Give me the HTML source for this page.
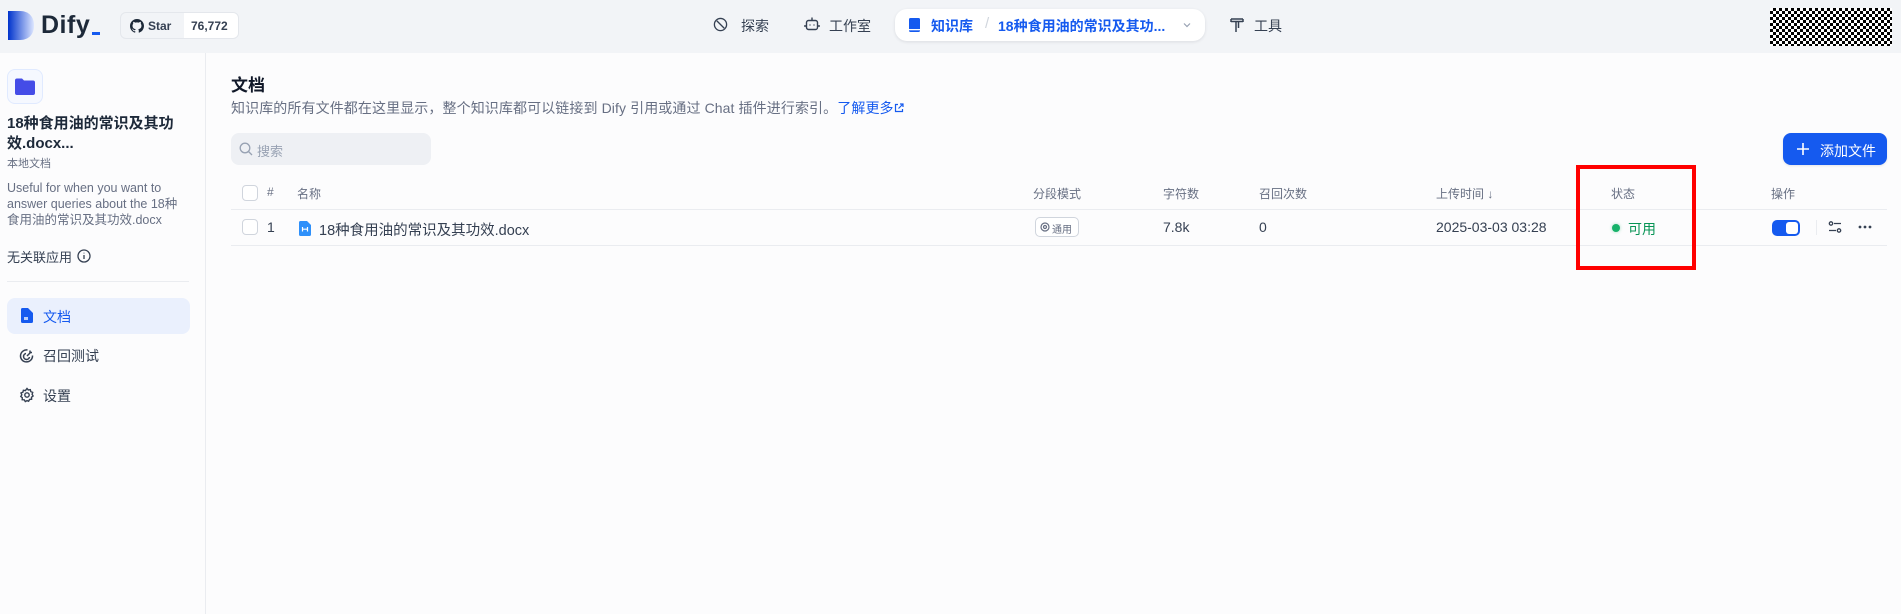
<!DOCTYPE html>
<html><head><meta charset="utf-8">
<style>
*{box-sizing:border-box;margin:0;padding:0}
body{width:1901px;height:614px;overflow:hidden;background:#fcfcfd;font-family:"Liberation Sans","Noto Sans CJK SC",sans-serif;color:#101828;position:relative}
.abs{position:absolute}
.hdr{left:0;top:0;width:1901px;height:53px;background:#f2f4f7}
.side{left:0;top:53px;width:206px;height:561px;border-right:1px solid #eaecf0;background:#fcfcfd}
.t{white-space:nowrap;position:absolute}
.th{font-size:12px;color:#676f83;top:185px}
.td{font-size:14px;color:#354052;top:219px}
.cb{width:16px;height:16px;border:1px solid #d0d5dd;border-radius:4px;background:#fff;position:absolute}
</style></head><body>
<div class="abs hdr"></div>
<svg class="abs" style="left:8px;top:11px" width="27" height="29" viewBox="0 0 27 29"><defs><linearGradient id="g" x1="0" x2="1"><stop offset="0" stop-color="#0033cc"/><stop offset="1" stop-color="#dde6ff"/></linearGradient></defs><path d="M0 0H12C21 0 26 6 26 14.5C26 23 21 29 12 29H0Z" fill="url(#g)"/></svg>
<div class="t" style="left:41px;top:11px;font-size:25px;font-weight:bold;color:#1d2939;letter-spacing:0.5px">Dify</div>
<div class="abs" style="left:92px;top:32px;width:8px;height:3px;background:#155aef"></div>
<div class="abs" style="left:120px;top:12px;width:119px;height:27px;border:1px solid #e4e7ec;border-radius:6px;background:#f2f4f7;overflow:hidden">
 <div class="abs" style="left:63px;top:0;width:56px;height:27px;background:#fff"></div>
 <svg class="abs" style="left:9px;top:6px" width="14" height="14" viewBox="0 0 16 16"><path fill="#1d2939" d="M8 0C3.58 0 0 3.58 0 8c0 3.54 2.29 6.530 5.47 7.59.4.07.55-.17.55-.38v-1.33c-2.23.48-2.7-1.07-2.7-1.07-.36-.92-.89-1.170-.89-1.17-.73-.5.05-.49.05-.49.8.06 1.23.83 1.23.83.71 1.23 1.87.87 2.330.66.07-.52.28-.87.51-1.07-1.78-.2-3.65-.89-3.65-3.95 0-.87.31-1.59.82-2.15-.08-.2-.36-1.02.08-2.12 0 0 .67-.21 2.2.82a7.6 7.6 0 0 1 4 0c1.53-1.04 2.2-.82 2.2-.82.44 1.1.16 1.92.08 2.12.51.56.82 1.27.82 2.15 0 3.07-1.87 3.75-3.65 3.95.29.25.54.73.54 1.48v2.2c0 .21.15.46.55.38A8 8 0 0 0 16 8c0-4.420-3.58-8-8-8z"/></svg>
 <div class="t" style="left:27px;top:6px;font-size:12px;font-weight:bold;color:#354052">Star</div>
 <div class="t" style="left:70px;top:6px;font-size:12px;font-weight:bold;color:#354052">76,772</div>
</div>
<svg class="abs" style="left:713px;top:17px" width="15" height="15" viewBox="0 0 16 16" fill="none" stroke="#354052" stroke-width="1.4"><circle cx="8" cy="8" r="6.5"/><path d="M4 4l8 8"/></svg>
<div class="t" style="left:741px;top:16px;font-size:14px;color:#354052">探索</div>
<svg class="abs" style="left:804px;top:16px" width="16" height="16" viewBox="0 0 16 16" fill="none" stroke="#354052" stroke-width="1.4"><rect x="2.5" y="4.5" width="11" height="9" rx="2"/><path d="M8 1.5v3M6 8.5v1M10 8.5v1M1 9v2M15 9v2"/></svg>
<div class="t" style="left:829px;top:16px;font-size:14px;color:#354052">工作室</div>
<div class="abs" style="left:895px;top:9px;width:310px;height:32px;background:#fff;border-radius:12px;box-shadow:0 1px 3px rgba(16,24,40,.1)"></div>
<svg class="abs" style="left:908px;top:17px" width="14" height="16" viewBox="0 0 14 16"><rect x="1" y="1" width="11" height="14" rx="1.5" fill="#155aef"/><rect x="1" y="12" width="11" height="1.3" fill="#fff"/></svg>
<div class="t" style="left:931px;top:16px;font-size:14px;font-weight:bold;color:#155aef">知识库</div>
<div class="t" style="left:985px;top:15px;font-size:15px;color:#d0d5dd">/</div>
<div class="t" style="left:998px;top:16px;font-size:14px;font-weight:bold;color:#155aef">18种食用油的常识及其功...</div>
<svg class="abs" style="left:1183px;top:22px" width="8" height="6" viewBox="0 0 8 6" fill="none" stroke="#98a2b3" stroke-width="1.2"><path d="M1 1.5l3 3 3-3"/></svg>
<svg class="abs" style="left:1230px;top:17px" width="14" height="16" viewBox="0 0 14 16" fill="none" stroke="#354052" stroke-width="1.5"><path d="M1 2h12M1 2v3M13 2v3M1 4.5h12M6 4.5V15M8.5 4.5V11"/></svg>
<div class="t" style="left:1254px;top:16px;font-size:14px;color:#354052">工具</div>
<div class="abs" style="left:1770px;top:8px;width:122px;height:38px;background-color:#fff;background-image:conic-gradient(#000 25%,#fff 25% 50%,#000 50% 75%,#fff 75%);background-size:6px 6px"></div>
<div class="abs side"></div>
<div class="abs" style="left:7px;top:69px;width:36px;height:35px;border:1px solid #e0eaff;border-radius:8px;background:#f5f8ff"></div>
<svg class="abs" style="left:15px;top:78px" width="20" height="17" viewBox="0 0 20 17"><path d="M0 2.5A2 2 0 0 1 2 .5h5l2 2h9a2 2 0 0 1 2 2V15a2 2 0 0 1-2 2H2a2 2 0 0 1-2-2Z" fill="#444ce7"/></svg>
<div class="t" style="left:7px;top:114px;font-size:15px;font-weight:bold;color:#1d2939;line-height:20px">18种食用油的常识及其功<br>效.docx...</div>
<div class="t" style="left:7px;top:155px;font-size:11px;color:#676f83">本地文档</div>
<div class="t" style="left:7px;top:180px;font-size:12.5px;color:#676f83;line-height:16px">Useful for when you want to<br>answer queries about the 18种<br>食用油的常识及其功效.docx</div>
<div class="t" style="left:7px;top:247px;font-size:13px;color:#354052">无关联应用</div>
<svg class="abs" style="left:77px;top:249px" width="14" height="14" viewBox="0 0 14 14" fill="none" stroke="#354052" stroke-width="1.3"><circle cx="7" cy="7" r="6"/><path d="M7 6v4M7 3.8v.6"/></svg>
<div class="abs" style="left:7px;top:281px;width:182px;height:1px;background:#eaecf0"></div>
<div class="abs" style="left:7px;top:298px;width:183px;height:36px;background:#eaf0fd;border-radius:8px"></div>
<svg class="abs" style="left:21px;top:308px" width="12" height="15" viewBox="0 0 12 15"><path d="M0 1.5A1.5 1.5 0 0 1 1.5 0H7l5 5v8.5A1.5 1.5 0 0 1 10.5 15h-9A1.5 1.5 0 0 1 0 13.5Z" fill="#155aef"/><rect x="3" y="9" width="4" height="3" fill="#fff" opacity=".7"/></svg>
<div class="t" style="left:43px;top:307px;font-size:14px;color:#155aef">文档</div>
<svg class="abs" style="left:19px;top:348px" width="16" height="16" viewBox="0 0 16 16" fill="none" stroke="#354052" stroke-width="1.5"><path d="M13.5 7.5A6 6 0 1 1 8.5 2"/><path d="M10.5 9A3 3 0 1 1 7 5.5"/><path d="M8 8l4-4M11 2.5v2h2"/></svg>
<div class="t" style="left:43px;top:346px;font-size:14px;color:#354052">召回测试</div>
<svg class="abs" style="left:19px;top:387px" width="16" height="16" viewBox="0 0 16 16" fill="none" stroke="#354052" stroke-width="1.4"><circle cx="8" cy="8" r="2.2"/><path d="M8 1.5l1.3 1.5 2-.3.5 1.9 1.9.8-.6 1.9 1 1.7-1.6 1.2.1 2-2 .2-1 1.8L8 13.6l-1.7 1-1.1-1.8-2-.1.1-2L1.8 9.5l1-1.7L2 6l1.9-.8.5-1.9 2 .3Z"/></svg>
<div class="t" style="left:43px;top:386px;font-size:14px;color:#354052">设置</div>
<div class="t" style="left:231px;top:71px;font-size:17px;font-weight:bold;color:#101828">文档</div>
<div class="t" style="left:231px;top:98px;font-size:14px;color:#676f83;letter-spacing:0.1px">知识库的所有文件都在这里显示，整个知识库都可以链接到 Dify 引用或通过 Chat 插件进行索引。<span style="color:#155aef">了解更多<svg width="10" height="10" viewBox="0 0 10 10" fill="none" stroke="#155aef" stroke-width="1.2" style="vertical-align:0"><path d="M4 1.5H1.5v7h7V6M6 1h3v3M9 1L4.5 5.5"/></svg></span></div>
<div class="abs" style="left:231px;top:133px;width:200px;height:32px;background:#eef0f4;border-radius:8px"></div>
<svg class="abs" style="left:239px;top:142px" width="14" height="14" viewBox="0 0 14 14" fill="none" stroke="#98a2b3" stroke-width="1.3"><circle cx="6" cy="6" r="4.8"/><path d="M9.5 9.5L13 13"/></svg>
<div class="t" style="left:257px;top:141px;font-size:13px;color:#98a2b3">搜索</div>
<div class="abs" style="left:1783px;top:133px;width:104px;height:32px;background:#155aef;border-radius:8px;box-shadow:0 1px 2px rgba(16,24,40,.1)"></div>
<svg class="abs" style="left:1796px;top:142px" width="14" height="14" viewBox="0 0 14 14" stroke="#fff" stroke-width="1.6"><path d="M7 1v12M1 7h12"/></svg>
<div class="t" style="left:1820px;top:141px;font-size:14px;color:#fff">添加文件</div>
<div class="cb" style="left:242px;top:185px"></div>
<div class="t th" style="left:267px">#</div>
<div class="t th" style="left:297px">名称</div>
<div class="t th" style="left:1033px">分段模式</div>
<div class="t th" style="left:1163px">字符数</div>
<div class="t th" style="left:1259px">召回次数</div>
<div class="t th" style="left:1436px">上传时间 ↓</div>
<div class="t th" style="left:1611px">状态</div>
<div class="t th" style="left:1771px">操作</div>
<div class="abs" style="left:231px;top:209px;width:1656px;height:1px;background:#eaecf0"></div>
<div class="cb" style="left:242px;top:219px"></div>
<div class="t td" style="left:267px">1</div>
<svg class="abs" style="left:299px;top:221px" width="12" height="15" viewBox="0 0 12 15"><path d="M0 1.5A1.5 1.5 0 0 1 1.5 0H8l4 4v9.5A1.5 1.5 0 0 1 10.5 15h-9A1.5 1.5 0 0 1 0 13.5Z" fill="#2e90fa"/><path d="M3.5 6v4.5M8.5 6v4.5M3.5 8.2h5" stroke="#fff" stroke-width="1.2"/></svg>
<div class="t td" style="left:319px;top:219px;font-size:14.5px">18种食用油的常识及其功效.docx</div>
<div class="abs" style="left:1035px;top:217px;width:44px;height:20px;border:1px solid #d0d5dd;border-radius:5px;background:#fff"></div>
<svg class="abs" style="left:1040px;top:222px" width="10" height="10" viewBox="0 0 10 10" fill="none" stroke="#676f83" stroke-width="1.2"><circle cx="5" cy="5" r="4"/><circle cx="5" cy="5" r="1.5"/></svg>
<div class="t" style="left:1052px;top:221px;font-size:10px;color:#676f83">通用</div>
<div class="t td" style="left:1163px">7.8k</div>
<div class="t td" style="left:1259px">0</div>
<div class="t td" style="left:1436px">2025-03-03 03:28</div>
<div class="abs" style="left:1612px;top:224px;width:8px;height:8px;border-radius:50%;background:#17b26a;box-shadow:0 0 3px rgba(23,178,106,.4)"></div>
<div class="t" style="left:1628px;top:219px;font-size:14px;color:#079455">可用</div>
<div class="abs" style="left:1772px;top:220px;width:28px;height:16px;border-radius:5px;background:#155aef"></div>
<div class="abs" style="left:1786px;top:222px;width:12px;height:12px;border-radius:3px;background:#fff"></div>
<div class="abs" style="left:1816px;top:220px;width:1px;height:15px;background:#eaecf0"></div>
<svg class="abs" style="left:1828px;top:220px" width="14" height="14" viewBox="0 0 14 14" fill="none" stroke="#354052" stroke-width="1.3"><circle cx="3" cy="3.5" r="1.7"/><path d="M6 3.5h7M1 10.5h7"/><circle cx="11" cy="10.5" r="1.7"/></svg>
<svg class="abs" style="left:1858px;top:225px" width="14" height="4" viewBox="0 0 14 4" fill="#354052"><circle cx="2" cy="2" r="1.4"/><circle cx="7" cy="2" r="1.4"/><circle cx="12" cy="2" r="1.4"/></svg>
<div class="abs" style="left:231px;top:245px;width:1656px;height:1px;background:#eaecf0"></div>
<div class="abs" style="left:1576px;top:165px;width:120px;height:105px;border:4px solid #ff0000"></div>
</body></html>
